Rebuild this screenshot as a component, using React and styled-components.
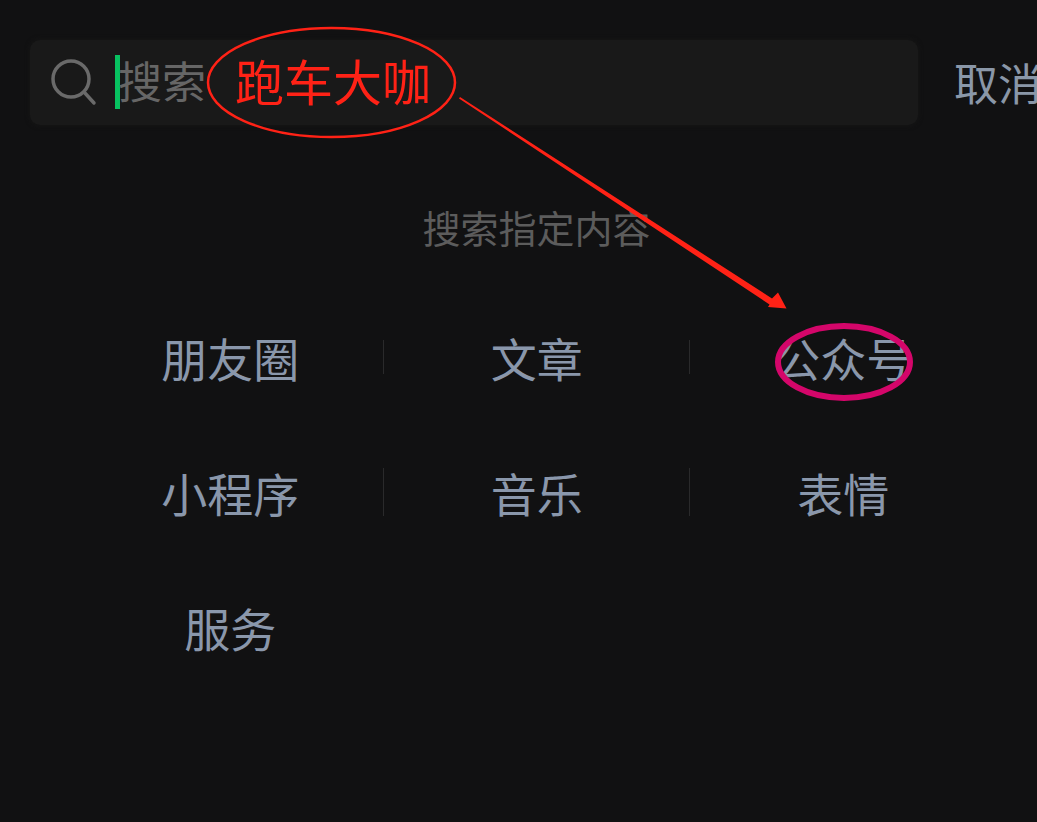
import React from "react";
import styled, { createGlobalStyle } from "styled-components";

const Global = createGlobalStyle`
  html, body { margin: 0; padding: 0; background: #111112; }
  * { box-sizing: border-box; }
`;

const CJK = `"Noto Sans CJK SC", "Noto Sans", sans-serif`;

const Page = styled.div`
  position: relative;
  width: 1037px;
  height: 822px;
  overflow: hidden;
  background: #111112;
  font-family: ${CJK};
`;

const TopBar = styled.div`
  display: flex;
  align-items: center;
  padding: 40px 0 0 30px;
  white-space: nowrap;
`;

const SearchBox = styled.div`
  display: flex;
  align-items: center;
  flex: none;
  width: 888px;
  height: 85px;
  padding-left: 20px;
  background: #191919;
  border-radius: 10px;
  box-shadow: 0 0 4px 1px #151515;
`;

const SearchIcon = styled.svg`
  flex: none;
  width: 48px;
  height: 48px;
  margin: -2px 17px 0 0;
`;

const Caret = styled.span`
  flex: none;
  width: 5px;
  height: 54px;
  margin-top: -2px;
  background: #07c160;
`;

const Placeholder = styled.span`
  margin: -5px 0 0 -2px;
  font-size: 44px;
  line-height: 54px;
  color: #666666;
`;

const Cancel = styled.span`
  flex: none;
  margin-left: 36px;
  font-size: 44px;
  line-height: 85px;
  color: #8a97a8;
`;

const Heading = styled.div`
  width: 919px;
  margin: 77px 0 0 77px;
  text-align: center;
  font-size: 38px;
  line-height: 50px;
  color: #5c5c5c;
`;

const Grid = styled.div`
  display: grid;
  grid-template-columns: repeat(3, 306.5px);
  grid-auto-rows: 135px;
  margin: 39px 0 0 77px;
`;

const Cell = styled.div`
  position: relative;
  display: flex;
  align-items: center;
  justify-content: center;
  padding-bottom: 4px;
  font-size: 46px;
  color: #8a97ab;
  &::after {
    content: "";
    display: ${(p) => (p.$divider ? "block" : "none")};
    position: absolute;
    right: 0;
    top: 50%;
    width: 1px;
    height: ${(p) => p.$dividerHeight}px;
    margin-top: -${(p) => p.$dividerHeight / 2 + 2}px;
    background: #2a2a2b;
  }
`;

const RedLabel = styled.span`
  position: absolute;
  left: 235px;
  top: 46px;
  font-size: 49px;
  line-height: 68px;
  color: #ff2216;
  white-space: nowrap;
`;

const Overlay = styled.svg`
  position: absolute;
  left: 0;
  top: 0;
  width: 1037px;
  height: 822px;
  pointer-events: none;
`;

const rows = [
  [["朋友圈", 34], ["文章", 34], ["公众号"]],
  [["小程序", 48], ["音乐", 48], ["表情"]],
  [["服务"]],
];

export default function App() {
  return (
    <Page>
      <Global />
      <TopBar>
        <SearchBox>
          <SearchIcon viewBox="0 0 48 48" fill="none">
            <circle cx="21" cy="21" r="18" stroke="#6a6a6a" strokeWidth="3.5" />
            <path d="M34 34L44 45" stroke="#6a6a6a" strokeWidth="3.5" strokeLinecap="round" />
          </SearchIcon>
          <Caret />
          <Placeholder>搜索</Placeholder>
        </SearchBox>
        <Cancel>取消</Cancel>
      </TopBar>
      <Heading>搜索指定内容</Heading>
      <Grid>
        {rows.flat().map(([label, h]) => (
          <Cell key={label} $divider={!!h} $dividerHeight={h}>
            {label}
          </Cell>
        ))}
      </Grid>
      <RedLabel>跑车大咖</RedLabel>
      <Overlay viewBox="0 0 1037 822" fill="none">
        <ellipse cx="331.5" cy="82.5" rx="123.5" ry="54.5" stroke="#ff2216" strokeWidth="2.5" />
        <path d="M460 97L772 298.5L778 292.5L786.5 308.5L768 307L769.5 304.5L459 98.5Z" fill="#ff2216" />
        <ellipse cx="844" cy="362" rx="66" ry="36" stroke="#d4066a" strokeWidth="6" />
      </Overlay>
    </Page>
  );
}
